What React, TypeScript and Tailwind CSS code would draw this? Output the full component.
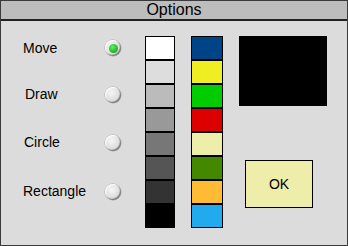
import React from "react";

const grays = ["#ffffff", "#dddddd", "#bbbbbb", "#999999", "#777777", "#555555", "#333333", "#000000"];
const colors = ["#004488", "#eeee22", "#00cc00", "#dd0000", "#eeeeaa", "#448800", "#ffbb33", "#22aaee"];

function Radio({ on }: { on?: boolean }) {
  return (
    <div className="w-[16px] h-[16px] rounded-full bg-[radial-gradient(circle_at_40%_35%,#f6f6f6_0%,#dedede_55%,#8a8a8a_100%)] shadow-[inset_-1px_-1px_1px_rgba(0,0,0,0.4),inset_1px_1px_1px_rgba(255,255,255,0.9),0_0_0_0.5px_rgba(0,0,0,0.25)] flex items-center justify-center">
      {on && (
        <div className="w-[9px] h-[9px] rounded-full bg-[radial-gradient(circle_at_40%_35%,#66ee66_0%,#22bb22_60%,#118811_100%)]" />
      )}
    </div>
  );
}

const rows: { label: string; pl: string; h: string; on?: boolean }[] = [
  { label: "Move", pl: "pl-[22px]", h: "h-[46px]", on: true },
  { label: "Draw", pl: "pl-[24px]", h: "h-[47px]" },
  { label: "Circle", pl: "pl-[23px]", h: "h-[49px]" },
  { label: "Rectangle", pl: "pl-[22px]", h: "h-[49px]" },
];

export default function App() {
  return (
    <div className="w-[348px] h-[246px] bg-[#dcdcdc] border border-[#3a3a3a] flex flex-col font-['Liberation_Sans',Arial,sans-serif] text-black overflow-hidden">
      <div className="h-[20px] shrink-0 bg-[#bdbdbd] border-b-2 border-[#222] flex items-center justify-center text-[16px] leading-none">
        Options
      </div>
      <div className="flex flex-1">
        <div className="w-[122px] pt-[4px] flex flex-col">
          {rows.map((r) => (
            <div key={r.label} className={`${r.h} flex items-center`}>
              <div className={`flex-1 text-[14px] ${r.pl}`}>{r.label}</div>
              <div className="mr-[2px]">
                <Radio on={r.on} />
              </div>
            </div>
          ))}
        </div>
        <div className="ml-[22px] mt-[15px] w-[30px] h-[192px] bg-black border border-black flex flex-col gap-[2px]">
          {grays.map((c) => (
            <div key={c} className="flex-1" style={{ backgroundColor: c }} />
          ))}
        </div>
        <div className="ml-[16px] mt-[15px] w-[32px] h-[192px] bg-black border border-black flex flex-col gap-[2px]">
          {colors.map((c) => (
            <div key={c} className="flex-1" style={{ backgroundColor: c }} />
          ))}
        </div>
        <div className="ml-[16px] mt-[15px] flex flex-col">
          <div className="w-[88px] h-[70px] bg-black" />
          <button className="ml-[6px] mt-[54px] w-[68px] h-[48px] bg-[#eeeeaa] border border-black text-[14px] flex items-center justify-center">
            OK
          </button>
        </div>
      </div>
    </div>
  );
}
